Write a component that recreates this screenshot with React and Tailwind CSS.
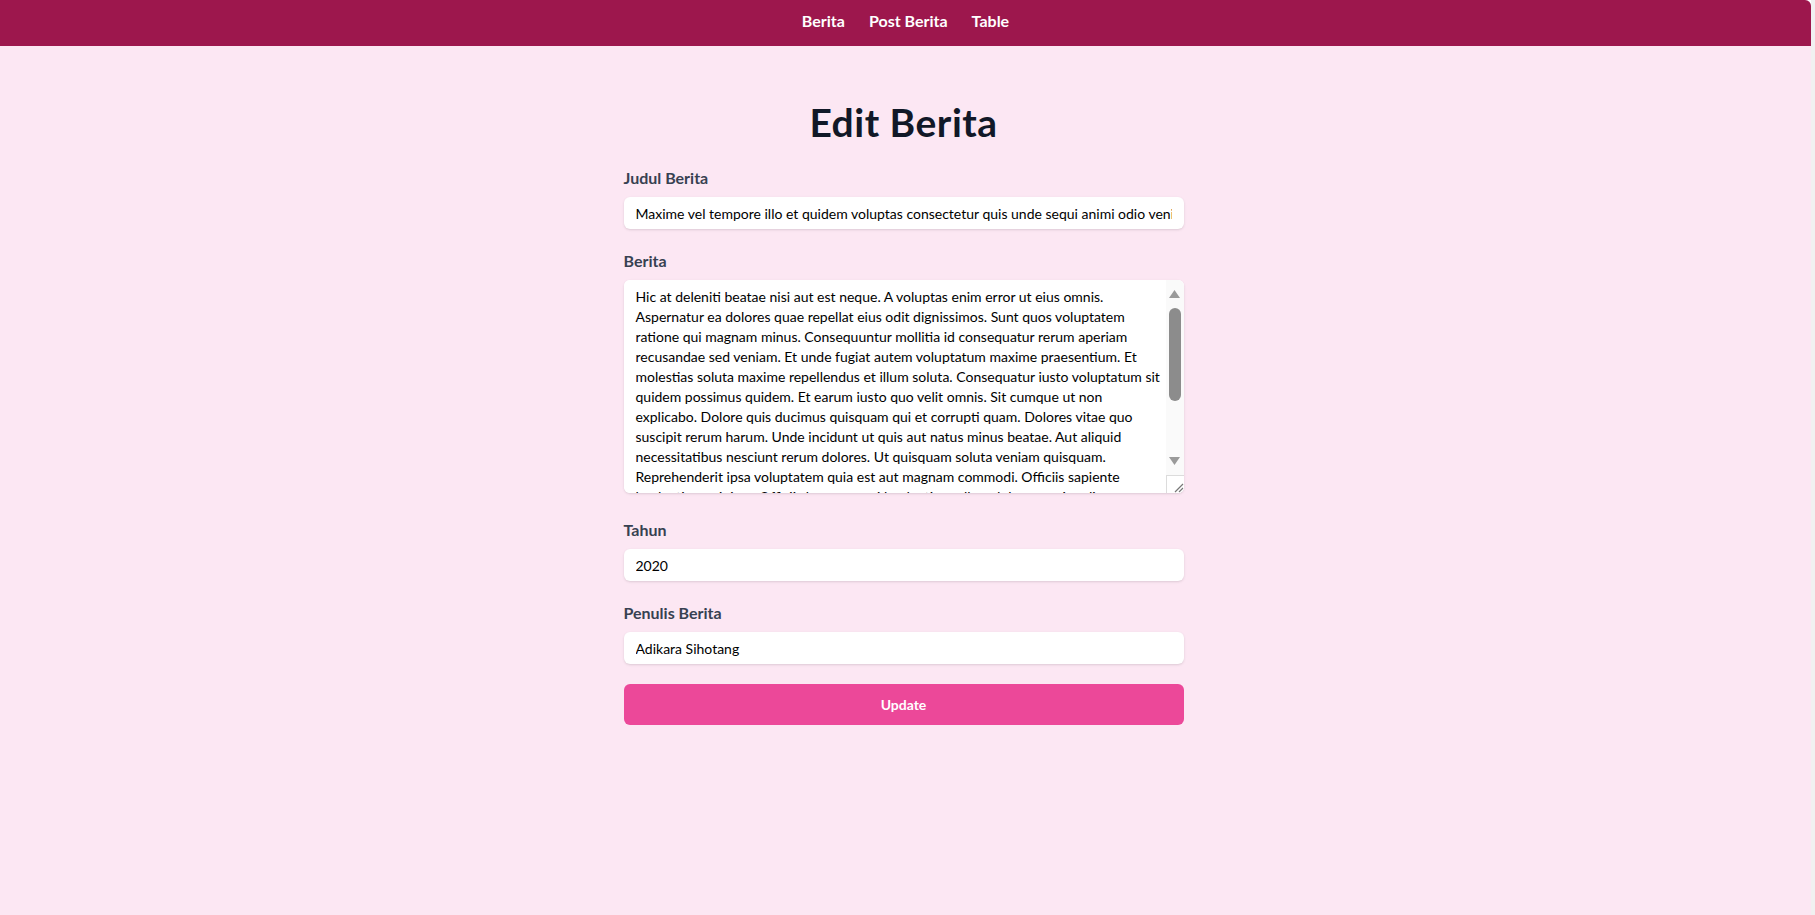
import { useState } from 'react';

const initialBerita = [
  'Hic at deleniti beatae nisi aut est neque. A voluptas enim error ut eius omnis.',
  'Aspernatur ea dolores quae repellat eius odit dignissimos. Sunt quos voluptatem',
  'ratione qui magnam minus. Consequuntur mollitia id consequatur rerum aperiam',
  'recusandae sed veniam. Et unde fugiat autem voluptatum maxime praesentium. Et',
  'molestias soluta maxime repellendus et illum soluta. Consequatur iusto voluptatum sit',
  'quidem possimus quidem. Et earum iusto quo velit omnis. Sit cumque ut non',
  'explicabo. Dolore quis ducimus quisquam qui et corrupti quam. Dolores vitae quo',
  'suscipit rerum harum. Unde incidunt ut quis aut natus minus beatae. Aut aliquid',
  'necessitatibus nesciunt rerum dolores. Ut quisquam soluta veniam quisquam.',
  'Reprehenderit ipsa voluptatem quia est aut magnam commodi. Officiis sapiente',
  'laudantium minima. Officiis harum quasi laudantium ullam dolorem quia odio aut',
  'tempora qui. Voluptatem et rerum est nobis. Nihil omnis voluptas eos ut quia sint',
  'rem. Eum ipsam ut distinctio consequatur. Quia et tempore ut dolorem et quas.',
  'Ratione ut aut ea et. Est autem quaerat enim aut voluptatem magnam. Accusamus',
  'sint sed qui dolor. Iure soluta ipsam voluptas deserunt sit. Et voluptas qui sunt',
  'nisi. Odit quis nihil at quidem est.',
].join('\n');

const Field = ({ label, className = 'mb-5', children }) => (
  <div className={className}>
    <label className="block mb-[7px] text-base leading-6 font-bold text-[#374151]">{label}</label>
    {children}
  </div>
);

// the screenshot browser hides native scrollbars, so the textarea's bar is drawn over it
const FakeScrollbar = () => (
  <div className="absolute top-0 right-0 bottom-0 w-[18px] bg-[#fafafa] flex flex-col items-center pointer-events-none">
    <svg className="mt-[10px]" width="11" height="8" viewBox="0 0 11 8">
      <polygon points="5.5,0 11,8 0,8" fill="#9a9a9a" />
    </svg>
    <div className="mt-[10px] w-3 h-[93px] rounded-full bg-[#8c8c8c]" />
    <div className="flex-1" />
    <svg className="mb-[10px]" width="11" height="8" viewBox="0 0 11 8">
      <polygon points="0,0 11,0 5.5,8" fill="#9a9a9a" />
    </svg>
    <div className="w-[18px] h-[18px] bg-white border-t border-l border-[#dcdcdc] flex items-end justify-end">
      <svg width="12" height="12" viewBox="0 0 12 12">
        <path d="M11 3 L3 11 M11 7 L7 11" stroke="#777" strokeWidth="1.2" />
      </svg>
    </div>
  </div>
);

const App = () => {
  const [judul, setJudul] = useState('Maxime vel tempore illo et quidem voluptas consectetur quis unde sequi animi odio veniam');
  const [berita, setBerita] = useState(initialBerita);
  const [tahun, setTahun] = useState('2020');
  const [penulis, setPenulis] = useState('Adikara Sihotang');

  const handleSubmit = (e) => {
    e.preventDefault();
  };

  const inputClass = 'block w-full h-8 px-3 text-sm text-black bg-white rounded-md shadow-sm outline-none';

  return (
    <div className="flex min-h-screen font-['Lato','Liberation_Sans',sans-serif]">
      <div className="flex-1 flex flex-col bg-[#fce7f3] rounded-tr-[6px]">
        <nav className="bg-[#9d174d] h-[46px] pb-1 flex items-center justify-center gap-6 rounded-tr-[6px]">
          <a href="#" className="text-base font-bold text-white">Berita</a>
          <a href="#" className="text-base font-bold text-white">Post Berita</a>
          <a href="#" className="text-base font-bold text-white">Table</a>
        </nav>

        <div className="w-[560px] mx-auto pt-[56px] pb-10 -translate-x-[2px]">
          <h1 className="text-[39px] leading-10 tracking-[0.5px] font-bold text-center text-[#111827] mb-6">Edit Berita</h1>

          <form onSubmit={handleSubmit}>
            <Field label="Judul Berita">
              <input className={inputClass} value={judul} onChange={e => setJudul(e.target.value)} />
            </Field>

            <Field label="Berita" className="mb-[25px]">
              <div className="relative rounded-md shadow-sm overflow-hidden bg-white">
                <textarea
                  className="block w-full h-[213px] pl-3 pr-6 pt-[7px] pb-2 text-sm leading-5 text-black bg-white outline-none resize-none whitespace-pre overflow-hidden"
                  value={berita}
                  onChange={e => setBerita(e.target.value)}
                />
                <FakeScrollbar />
              </div>
            </Field>

            <Field label="Tahun">
              <input className={inputClass} value={tahun} onChange={e => setTahun(e.target.value)} />
            </Field>

            <Field label="Penulis Berita">
              <input className={inputClass} value={penulis} onChange={e => setPenulis(e.target.value)} />
            </Field>

            <button type="submit" className="block w-full h-[41px] text-sm font-bold text-white bg-[#ec4899] rounded-md">
              Update
            </button>
          </form>
        </div>
      </div>
      <div className="w-1 bg-[#f1f1f1]" />
    </div>
  );
};

export default App;
